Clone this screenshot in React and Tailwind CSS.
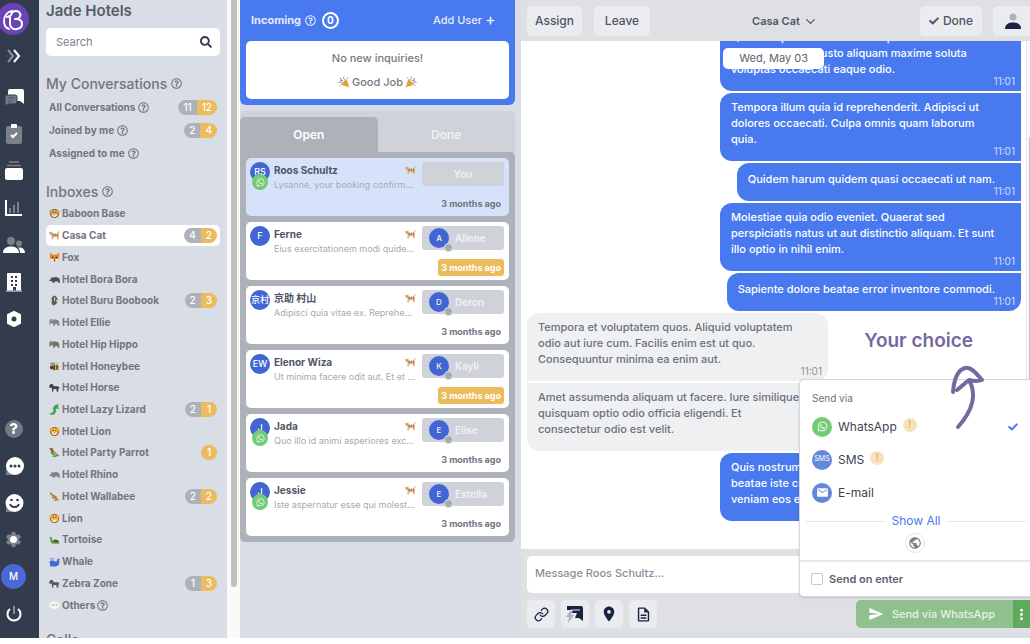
import { useState } from "react";
import {
  FaCheck,
  FaSearch,
  FaRegQuestionCircle,
  FaQuestion,
  FaWhatsapp,
  FaPlus,
} from "react-icons/fa";
import {
  MdEmail,
  MdSend,
  MdLocationOn,
  MdPublic,
  MdMoreVert,
  MdSettings,
  MdOutlineDescription,
} from "react-icons/md";
import { Link, ChevronDown } from "lucide-react";

const myConversations = [
  { name: "All Conversations", open: 11, waiting: 12 },
  { name: "Joined by me", open: 2, waiting: 4 },
  { name: "Assigned to me" },
];

const inboxes = [
  { name: "Baboon Base", icon: "face", color: "#d9a55f", dark: "#8a5a2c" },
  { name: "Casa Cat", icon: "cat", open: 4, waiting: 2, active: true },
  { name: "Fox", icon: "fox", color: "#e0862f" },
  { name: "Hotel Bora Bora", icon: "boar", color: "#4b4e52" },
  { name: "Hotel Buru Boobook", icon: "badger", open: 2, waiting: 3 },
  { name: "Hotel Ellie", icon: "heavy", color: "#7f8489" },
  { name: "Hotel Hip Hippo", icon: "heavy", color: "#74706f" },
  { name: "Hotel Honeybee", icon: "bee" },
  { name: "Hotel Horse", icon: "horse", color: "#3d4043" },
  { name: "Hotel Lazy Lizard", icon: "lizard", open: 2, waiting: 1 },
  { name: "Hotel Lion", icon: "face", color: "#f0b63c", dark: "#a8521d" },
  { name: "Hotel Party Parrot", icon: "parrot", waiting: 1 },
  { name: "Hotel Rhino", icon: "boar", color: "#7c8187" },
  { name: "Hotel Wallabee", icon: "kangaroo", open: 2, waiting: 2 },
  { name: "Lion", icon: "face", color: "#f0b63c", dark: "#a8521d" },
  { name: "Tortoise", icon: "tortoise" },
  { name: "Whale", icon: "whale" },
  { name: "Zebra Zone", icon: "horse", color: "#55585c", open: 1, waiting: 3 },
  { name: "Others", icon: "speech", help: true },
];

const conversations = [
  { name: "Roos Schultz", initials: "RS", text: "Lysanne, your booking confirmation", agent: "You", whatsapp: true, active: true },
  { name: "Ferne", initials: "F", text: "Eius exercitationem modi quidem aut", agent: "Allene", late: true },
  { name: "京助 村山", initials: "京村", text: "Adipisci quia vitae ex. Reprehenderit", agent: "Deron" },
  { name: "Elenor Wiza", initials: "EW", text: "Ut minima facere odit aut. Et et quia", agent: "Kayli", late: true },
  { name: "Jada", initials: "J", text: "Quo illo id animi asperiores excepturi", agent: "Elise", whatsapp: true },
  { name: "Jessie", initials: "J", text: "Iste aspernatur esse qui molestias et", agent: "Estella", whatsapp: true },
];

const messages = [
  { text: "Quasi neque rerum et autem quia. Sit\nullam velit id hic iusto aliquam maxime soluta\nvoluptas occaecati eaque odio." },
  { text: "Tempora illum quia id reprehenderit. Adipisci ut dolores occaecati. Culpa omnis quam laborum quia." },
  { text: "Quidem harum quidem quasi occaecati ut nam.", short: true },
  { text: "Molestiae quia odio eveniet. Quaerat sed perspiciatis natus ut aut distinctio aliquam. Et sunt illo optio in nihil enim." },
  { text: "Sapiente dolore beatae error inventore commodi.", short: true, last: true },
  { text: "Tempora et voluptatem quos. Aliquid voluptatem odio aut iure cum. Facilis enim est ut quo. Consequuntur minima ea enim aut.", received: true },
  { text: "Amet assumenda aliquam ut facere. Iure similique quisquam optio odio officia eligendi. Et consectetur odio est velit.", received: true, last: true },
  { text: "Quis nostrum aut commodi sit. Eos\nbeatae iste consequatur et quia\nveniam eos et.", last: true },
];

function Animal({ icon, color, dark }) {
  return (
    <svg viewBox="0 0 24 24" className="h-[11px] w-[11px] shrink-0" aria-hidden="true">
      {icon === "face" && (
        <>
          <circle cx="12" cy="12" r="10" fill={dark} />
          <circle cx="3.500" cy="8" r="3" fill={color} />
          <circle cx="20.500" cy="8" r="3" fill={color} />
          <ellipse cx="12" cy="12" rx="8" ry="7.500" fill={color} />
          <ellipse cx="12" cy="16" rx="5" ry="4" fill="#f7e3bd" />
          <circle cx="9" cy="10" r="1.500" fill="#3a2a1d" />
          <circle cx="15" cy="10" r="1.500" fill="#3a2a1d" />
          <path d="M10 14h4l-2 2z" fill="#5b3420" />
        </>
      )}
      {icon === "fox" && (
        <>
          <path d="M2 1l6 5h8l6-5v13l-5 8H7l-5-8z" fill={color} />
          <path d="M2 14l7 1 3 4 3-4 7-1-5 8H7z" fill="#f7ead8" />
          <circle cx="8" cy="12" r="1.600" fill="#33251b" />
          <circle cx="16" cy="12" r="1.600" fill="#33251b" />
          <circle cx="12" cy="19" r="1.800" fill="#33251b" />
        </>
      )}
      {icon === "cat" && (
        <>
          <path d="M0 3l3 2 4-2 2 5h9c2-1 0-5 5-6l-2 6v14h-3l-1-7-7 1-2 6H5l1-9-5-3z" fill="#dcb07c" />
          <path d="M8 8h2v5H8zM13 8h2v4h-2zM18 8h2v6h-2z" fill="#8f6236" />
          <path d="M5 20h3v2H5zM18 20h3v2h-3zM1 8h4v2H1z" fill="#fff" />
          <circle cx="4" cy="7" r="1" fill="#33251b" />
        </>
      )}
      {icon === "boar" && (
        <path d="M0 14l5-4 1-4 3 2c5-3 12-1 14 3l1 8h-4l-1-3-7 1v2H8l-1-3-5-1z" fill={color} />
      )}
      {icon === "heavy" && (
        <>
          <path d="M1 8c1-4 6-4 8-2 6-2 12 0 13 4l1 9h-4l-1-4h-5v4H9v-5l-5-1-1 4H1z" fill={color} />
          <circle cx="5" cy="8" r="1" fill="#fff" />
        </>
      )}
      {icon === "badger" && (
        <>
          <path d="M8 3l4-2 4 3 3 5-2 9-6 5-5-3 1-8-2-4z" fill="#565a5c" />
          <path d="M11 4l3 4-3 7zM15 12l3-2-1 6z" fill="#e9e6dc" />
          <path d="M4 12l3 3-1 5z" fill="#b98a4b" />
        </>
      )}
      {icon === "bee" && (
        <>
          <ellipse cx="14" cy="14" rx="9" ry="6" fill="#eeb43a" />
          <path d="M10 8h3v12h-3zM16 8h3v11h-3z" fill="#3b3327" />
          <circle cx="6" cy="14" r="4" fill="#4b3a24" />
          <ellipse cx="8" cy="6" rx="6" ry="3.500" fill="#8d9aa0" />
          <ellipse cx="17" cy="6" rx="4" ry="3" fill="#b6c0c4" />
        </>
      )}
      {icon === "horse" && (
        <path d="M0 9l4-5 4 1 3 4h8c2 0 4 2 4 6l-2-3-1 9h-3l-1-6h-6l-1 6H7l-1-9-4 1z" fill={color} />
      )}
      {icon === "lizard" && (
        <path d="M20 1l-8 3-3 6 2 4-3 5-6 3 8 1 5-6-1-6 3-2 4 1-2-3z" fill="#43a447" stroke="#43a447" strokeWidth="1.500" />
      )}
      {icon === "parrot" && (
        <>
          <path d="M1 3c4-3 8-1 8 3l6 7 8 6-3 1-8-2c-7 0-9-6-8-11z" fill="#4f9347" />
          <path d="M1 3c3-3 7-1 8 3L4 8z" fill="#d34a38" />
          <path d="M8 10l11 8-8-1z" fill="#e6b53b" />
          <path d="M8 19h9v2H8z" fill="#6d4b32" />
        </>
      )}
      {icon === "kangaroo" && (
        <path d="M3 2l3 3 4 3 5 3c3 2 3 5 6 9l2 2-6-2-2 2H9l5-3-4-4-1 3-2-1V11L2 7z" fill="#b9833f" />
      )}
      {icon === "tortoise" && (
        <>
          <path d="M1 7c3-3 6 0 6 4l2 4c4-4 11-3 13 3v3H8l-4-2-1-6z" fill="#63a04a" />
          <path d="M8 17c2-7 12-6 14 1z" fill="#3d5f35" />
        </>
      )}
      {icon === "whale" && (
        <>
          <path d="M1 12c4-4 10-1 13 0 3 0 4-2 4-5l5-2-1 6c2 7-2 12-10 12H3z" fill="#3f6bd8" />
          <path d="M7 10c0-6-5-6-5-3M7 10c0-6 5-6 5-3" stroke="#5d8ce6" strokeWidth="2" fill="none" />
        </>
      )}
      {icon === "speech" && (
        <>
          <path d="M12 3c6 0 11 3 11 8s-5 8-11 8l-6 3 1-4c-4-1-6-4-6-7 0-5 5-8 11-8z" fill="#f6f6f7" />
          <circle cx="7" cy="11" r="1.500" fill="#9a9da2" />
          <circle cx="12" cy="11" r="1.500" fill="#9a9da2" />
          <circle cx="17" cy="11" r="1.500" fill="#9a9da2" />
        </>
      )}
    </svg>
  );
}

function Popper({ flip }) {
  return (
    <svg viewBox="0 0 24 24" className={flip ? "h-3 w-3 -scale-x-100" : "h-3 w-3"} aria-hidden="true">
      <path d="M1 23L7 5l12 12z" fill="#e3ae4b" />
      <path d="M5 15l5 4M7 10l7 7" stroke="#b9782d" strokeWidth="1.500" />
      <path d="M11 7c2-1 2-4 1-6M16 14c2-3 5-2 7-1" stroke="#5b86d8" strokeWidth="2" fill="none" />
      <path d="M14 10l6-6" stroke="#d9654f" strokeWidth="2" />
      <circle cx="18" cy="9" r="1.500" fill="#4c78c4" />
      <circle cx="5" cy="4" r="1.500" fill="#e3ae4b" />
      <circle cx="20" cy="19" r="1.500" fill="#e3ae4b" />
    </svg>
  );
}

function Counts({ open, waiting }) {
  if (!waiting) return null;
  return (
    <span className="ml-auto flex h-[15px] overflow-hidden rounded-full text-[10px] leading-[15px] font-medium text-white">
      {open && <span className="min-w-4 bg-[#adb2ba] px-[5px] text-center">{open}</span>}
      <span className="min-w-4 bg-[#ecbb5d] px-[5px] text-center">{waiting}</span>
    </span>
  );
}

function NavRail() {
  const item = "flex h-[37px] w-[27px] items-center justify-center";
  return (
    <nav className="flex w-[39px] shrink-0 flex-col bg-[#333c4c] pb-1.5 text-white">
      <a href="#home" aria-label="Home" className="flex h-[37px] w-[29px] items-center justify-end">
        <svg viewBox="0 0 32 32" className="h-8 w-8 shrink-0">
          <circle cx="16" cy="16" r="16" fill="#6a43b5" />
          <path
            d="M15 8C10 9 7 13 7 18c0 4 2 7 5 8M10 14l3-1v8c0 4 4 6 7 5 6-1 7-8 1-10h-3c5 0 7-4 4-7-3-2-7-1-8 3"
            fill="none"
            stroke="#fff"
            strokeWidth="2"
            strokeLinecap="round"
            strokeLinejoin="round"
          />
        </svg>
      </a>
      <button aria-label="Expand" className={`${item} mb-1`}>
        <svg viewBox="0 0 16 16" className="h-4 w-4" fill="none" strokeWidth="2">
          <path d="M2 2l5 6-5 6" stroke="#8b919b" />
          <path d="M8 2l5 6-5 6" stroke="#fff" />
        </svg>
      </button>
      <a href="#chats" aria-label="Chats" className={item}>
        <svg viewBox="0 0 20 18" className="h-[18px] w-5">
          <path d="M6 1h12a2 2 0 012 2v13l-4-3H6a2 2 0 01-2-2V3a2 2 0 012-2z" fill="#fff" />
          <path d="M2 7h9a2 2 0 012 2v5a2 2 0 01-2 2H4l-3 2V9a2 2 0 011-2z" fill="#737983" stroke="#333c4c" strokeWidth="1" />
          <path d="M4 10h6M4 13h4" stroke="#4b5361" />
        </svg>
      </a>
      <a href="#tasks" aria-label="Tasks" className={item}>
        <svg viewBox="0 0 16 20" className="h-5 w-4">
          <rect x="0" y="2" width="16" height="18" rx="2" fill="#7b8089" />
          <rect x="5" y="0" width="6" height="4" rx="1" fill="#fff" />
          <path d="M5 11l2 2 4-4" stroke="#fff" strokeWidth="2" fill="none" />
        </svg>
      </a>
      <a href="#archive" aria-label="Archive" className={item}>
        <svg viewBox="0 0 18 20" className="h-5 w-[18px]">
          <rect x="0" y="7" width="18" height="12" rx="2" fill="#fff" />
          <path d="M4 1h10M2 4.500h14" stroke="#7b8089" strokeWidth="1.500" />
        </svg>
      </a>
      <a href="#reports" aria-label="Reports" className={item}>
        <svg viewBox="0 0 18 18" className="h-[18px] w-[18px]">
          <path d="M1 1v15h16" stroke="#fff" strokeWidth="2" fill="none" />
          <path d="M5 14V9M9 14V6M13 14V3" stroke="#7b8089" strokeWidth="2" />
        </svg>
      </a>
      <a href="#contacts" aria-label="Contacts" className={item}>
        <svg viewBox="0 0 22 18" className="h-[18px] w-[22px]">
          <circle cx="8" cy="5" r="4" fill="#7b8089" />
          <circle cx="16" cy="7.500" r="3" fill="#7b8089" />
          <path d="M0 17c0-5 4-6.500 8-6.500s8 1.500 8 6.500zM17 17c0-3-1-4.500-2-5.500 4-.5 7 1.500 7 5.500z" fill="#fff" />
        </svg>
      </a>
      <a href="#hotels" aria-label="Hotels" className={item}>
        <svg viewBox="0 0 16 20" className="h-5 w-4">
          <rect x="1" y="1" width="14" height="18" rx="1" fill="#fff" />
          <path d="M5 4h2v2H5zM9 4h2v2H9zM5 8h2v2H5zM9 8h2v2H9zM5 12h2v2H5zM9 12h2v2H9zM7 15h3v4H7z" fill="#333c4c" />
          <path d="M0 19h16" stroke="#9fb2b7" strokeWidth="1.500" />
        </svg>
      </a>
      <a href="#apps" aria-label="Apps" className={item}>
        <svg viewBox="0 0 16 16" className="h-4 w-4">
          <path d="M8 1l6 3v8l-6 3-6-3V4z" fill="#fff" stroke="#fff" strokeWidth="2" strokeLinejoin="round" />
          <circle cx="8" cy="8" r="2.500" fill="#333c4c" />
        </svg>
      </a>

      <button aria-label="Help" className={`${item} mt-auto`}>
        <span className="flex h-[18px] w-[18px] items-center justify-center rounded-full bg-[#737983]">
          <FaQuestion size={11} />
        </span>
      </button>
      <button aria-label="Feedback" className={item}>
        <svg viewBox="0 0 20 20" className="h-5 w-5">
          <path d="M2 12v7h7z" fill="#7b8089" />
          <circle cx="11" cy="10" r="9" fill="#fff" />
          <circle cx="7" cy="10" r="1.500" fill="#333c4c" />
          <circle cx="11" cy="10" r="1.500" fill="#333c4c" />
          <circle cx="15" cy="10" r="1.500" fill="#333c4c" />
        </svg>
      </button>
      <button aria-label="Mood" className={item}>
        <svg viewBox="0 0 20 20" className="h-5 w-5">
          <path d="M2 12v7h7z" fill="#7b8089" />
          <circle cx="10.500" cy="10" r="9" fill="#fff" />
          <circle cx="7.500" cy="7" r="1.300" fill="#333c4c" />
          <circle cx="13.500" cy="7" r="1.300" fill="#333c4c" />
          <path d="M6 11c1 4 8 4 9 0" stroke="#333c4c" strokeWidth="1.800" fill="none" />
        </svg>
      </button>
      <button aria-label="Settings" className={item}>
        <span className="relative flex items-center justify-center text-[#7b8089]">
          <MdSettings size={19} />
          <span className="absolute h-[7px] w-[7px] rounded-full bg-white" />
        </span>
      </button>
      <button aria-label="Profile" className={item}>
        <span className="flex h-[25px] w-[25px] shrink-0 items-center justify-center rounded-full bg-[#4a68d6] text-[10px] font-medium">
          M
        </span>
      </button>
      <button aria-label="Log out" className={item}>
        <svg viewBox="0 0 16 16" className="h-4 w-4" fill="none" strokeWidth="2">
          <path d="M4 3a6.500 6.500 0 108 0" stroke="#fff" />
          <path d="M8 0v8" stroke="#8b919b" />
        </svg>
      </button>
    </nav>
  );
}

function InboxPanel() {
  return (
    <aside className="flex w-[188px] shrink-0 flex-col overflow-hidden bg-[#d9dde5] px-[7px] text-[#70757f]">
      <h1 className="h-[22px] text-[15px] leading-[22px] font-semibold text-[#545c6c]">Jade Hotels</h1>
      <div className="mt-1.5 flex h-7 shrink-0 items-center rounded-[5px] bg-white pr-2 pl-2.5">
        <input
          type="text"
          aria-label="Search"
          placeholder="Search"
          className="min-w-0 flex-1 text-[11px] outline-none placeholder:text-[#7b808a]"
        />
        <FaSearch size={12} className="text-[#333c4c]" />
      </div>

      <h2 className="mt-3.5 flex h-[26px] shrink-0 items-center gap-1 text-[14px] font-medium">
        My Conversations <FaRegQuestionCircle size={11} />
      </h2>
      <ul className="text-[10px] font-bold">
        {myConversations.map((item) => (
          <li key={item.name} className="flex h-[23px] items-center gap-[3px] px-[3px]">
            {item.name} <FaRegQuestionCircle size={11} />
            <Counts open={item.open} waiting={item.waiting} />
          </li>
        ))}
      </ul>

      <h2 className="mt-3.5 flex h-6 shrink-0 items-center gap-1 text-[14px] font-medium">
        Inboxes <FaRegQuestionCircle size={11} />
      </h2>
      <ul className="flex flex-1 flex-col text-[10px] font-bold">
        {inboxes.map((item) => (
          <li key={item.name} className="flex flex-1">
            <a
              href="#inbox"
              className={`flex flex-1 items-center gap-0.5 rounded-[5px] px-[3px] ${item.active ? "bg-white" : ""}`}
            >
              <Animal icon={item.icon} color={item.color} dark={item.dark} />
              {item.name}
              {item.help && <FaRegQuestionCircle size={11} />}
              <Counts open={item.open} waiting={item.waiting} />
            </a>
          </li>
        ))}
      </ul>
      <h2 className="h-[22px] shrink-0 overflow-hidden pt-3 text-[14px] leading-6 font-medium">Calls</h2>
    </aside>
  );
}

function ConversationCard({ item }) {
  return (
    <li className={`flex h-[58px] gap-1 rounded-[5px] p-1 pr-[5px] ${item.active ? "bg-[#d5e2fa]" : "bg-white"}`}>
      <div className="relative h-5 w-5 shrink-0">
        <span className="flex h-5 w-5 items-center justify-center rounded-full bg-[#4165d3] text-[9px] font-medium text-white">
          {item.initials}
        </span>
        {item.whatsapp && (
          <span className="absolute top-3 left-0.5 flex h-4 w-4 items-center justify-center rounded-full bg-[#73cb73] text-white">
            <FaWhatsapp size={9} />
          </span>
        )}
      </div>
      <div className="min-w-0 flex-1">
        <div className="flex h-4 items-center justify-between">
          <h3 className="text-[10px] font-bold text-[#4d5566]">{item.name}</h3>
          <Animal icon="cat" />
        </div>
        <p className="truncate text-[9px] leading-[14px] text-[#a4abb6]">{item.text}</p>
      </div>
      <div className="flex w-[84px] shrink-0 flex-col items-end justify-between pl-0.5">
        <button className="flex h-6 w-full items-center justify-center rounded-[3px] bg-[#cfd2d8] text-[10px] font-semibold text-[#f1f2f4]">
          {item.agent === "You" ? (
            "You"
          ) : (
            <span className="flex w-full items-center gap-1.5 pl-[7px]">
              <span className="relative flex h-5 w-5 items-center justify-center rounded-full bg-[#4165d3] text-[8px] font-medium">
                {item.agent[0]}
                <span className="absolute -right-1 -bottom-1 h-[9px] w-[9px] rounded-full border border-[#d9dce1] bg-[#a6a9ae]" />
              </span>
              {item.agent}
            </span>
          )}
        </button>
        <time
          className={`rounded-[3px] px-[3px] text-[9px] leading-[17px] font-bold whitespace-nowrap ${
            item.late ? "bg-[#ecbb5d] text-white" : "text-[#70757f]"
          }`}
        >
          3 months ago
        </time>
      </div>
    </li>
  );
}

function ConversationList() {
  const [tab, setTab] = useState("open");

  return (
    <section className="w-[281px] shrink-0 bg-[#d9dde5] pr-1.5">
      <div className="rounded-b-[6px] bg-[#4879ee] px-1.5 pb-1.5">
        <div className="flex h-[41px] items-center gap-1 pr-3.5 pl-[5px] text-[#e4ebfc]">
          <h2 className="text-[11px] font-bold">Incoming</h2>
          <FaRegQuestionCircle size={11} />
          <span className="ml-0.5 flex h-[17px] w-[17px] items-center justify-center rounded-full border-2 border-white text-[10px] font-bold text-white">
            0
          </span>
          <button className="ml-auto flex items-center gap-1 text-[11px] font-medium">
            Add User <FaPlus size={9} />
          </button>
        </div>
        <div className="flex h-[58px] flex-col justify-center rounded-[5px] bg-white text-center text-[11px] leading-6 font-medium text-[#747a84]">
          <p>No new inquiries!</p>
          <p className="flex items-center justify-center gap-0.5">
            <Popper flip /> Good Job <Popper />
          </p>
        </div>
      </div>

      <div className="mt-1.5 rounded-[5px] bg-[#cfd2d8]">
        <div className="flex h-[41px] text-[12px] font-semibold text-white" role="tablist">
          <button
            role="tab"
            aria-selected={tab === "open"}
            onClick={() => setTab("open")}
            className="mt-1.5 flex-1 rounded-t-[5px] bg-[#adb2ba]"
          >
            Open
          </button>
          <button
            role="tab"
            aria-selected={tab === "done"}
            onClick={() => setTab("done")}
            className="mt-1.5 flex-1 text-[#eff0f2]"
          >
            Done
          </button>
        </div>
        <ul className="flex flex-col gap-1.5 rounded-[5px] rounded-tl-none bg-[#adb2ba] p-1.5">
          {conversations.map((item) => (
            <ConversationCard key={item.name} item={item} />
          ))}
        </ul>
      </div>
    </section>
  );
}

function Message({ message }) {
  let shape = message.received
    ? "self-start rounded-r-xl bg-[#eff0f2] text-[#6b717d]"
    : "self-end rounded-l-xl bg-[#4879ee] text-white";
  if (message.received) shape += message.last ? " rounded-bl-xl" : " rounded-tl-xl";
  else if (message.last) shape += " rounded-br-xl";

  return (
    <div className={`shrink-0 pb-1 ${message.short ? "w-fit pt-2" : "w-[301px] pt-1.5"} ${shape}`}>
      <p className="pr-[26px] pl-[11px] text-[11px] leading-4 font-medium whitespace-pre-line">{message.text}</p>
      <time className="-mt-0.5 block pr-1.5 text-right text-[10px] leading-3 opacity-75">11:01</time>
    </div>
  );
}

function Warning() {
  return (
    <span className="mb-1 flex h-3.5 w-3.5 items-center justify-center rounded-full bg-[#f6e3bb] text-[10px] text-[#d9a23c]">
      !
    </span>
  );
}

function SendMenu() {
  const row = "flex h-[33px] w-full items-center gap-1.5 px-3";
  return (
    <div className="absolute right-0 bottom-9 w-[231px] rounded-l-[5px] border border-r-0 border-[#d4d7dc] bg-white text-[12px] text-[#3d4350] shadow-sm">
      <p className="px-3 pt-2.5 text-[10px] leading-4 text-[#6b717d]">Send via</p>
      <button className={`${row} mt-1`}>
        <span className="flex h-5 w-5 items-center justify-center rounded-full bg-[#73cb73] text-white">
          <FaWhatsapp size={11} />
        </span>
        WhatsApp
        <Warning />
        <FaCheck size={10} className="ml-auto text-[#4879ee]" />
      </button>
      <button className={row}>
        <span className="flex h-5 w-5 items-center justify-center rounded-full bg-[#6189d8] text-[7px] text-white">SMS</span>
        SMS
        <Warning />
      </button>
      <button className={row}>
        <span className="flex h-5 w-5 items-center justify-center rounded-full bg-[#6189d8] text-white">
          <MdEmail size={13} />
        </span>
        E-mail
      </button>
      <div className="flex items-center gap-1.5 pr-1 pl-1.5">
        <span className="h-px flex-1 bg-[#e2e4e8]" />
        <button className="leading-6 text-[#4879ee]">Show All</button>
        <span className="h-px flex-1 bg-[#e2e4e8]" />
      </div>
      <button
        aria-label="Webchat"
        className="mx-auto mb-[7px] flex h-5 w-5 items-center justify-center rounded-full border border-[#e2e4e8] text-[#7b808a]"
      >
        <MdPublic size={14} />
      </button>
      <label className="flex h-9 items-center gap-1.5 border-t-2 border-[#e6e8eb] px-[11px] text-[11px] font-semibold text-[#5d6472]">
        <input type="checkbox" className="h-3 w-3 appearance-none rounded-[2px] border border-[#c5c9d0]" />
        Send on enter
      </label>
    </div>
  );
}

function Chat() {
  const button = "flex items-center justify-center rounded-[5px] bg-[#ebecf0]";
  return (
    <section className="flex min-w-0 flex-1 flex-col bg-[#d9dde5] pb-[5px]">
      <header className="flex h-[41px] shrink-0 items-center bg-[#dfe0e4] pl-1.5 text-[12px] font-medium text-[#4d5566]">
        <button className={`${button} h-[30px] w-[55px]`}>Assign</button>
        <button className={`${button} ml-3 h-[30px] w-[56px]`}>Leave</button>
        <div className="relative mx-auto">
          <select
            aria-label="Inbox"
            className="block appearance-none pr-[18px] text-[11px] leading-5 font-semibold field-sizing-content outline-none"
          >
            <option>Casa Cat</option>
          </select>
          <ChevronDown size={15} className="pointer-events-none absolute top-[3px] right-0" />
        </div>
        <button className={`${button} mr-[11px] h-[30px] w-[62px] gap-1`}>
          <FaCheck size={10} /> Done
        </button>
        <button aria-label="Contact" className={`${button} h-[30px] w-[37px] rounded-r-none pl-1`}>
          <svg viewBox="0 0 16 16" className="h-4 w-4">
            <circle cx="8" cy="4" r="3.500" fill="#adb2ba" />
            <path d="M0 16c0-5 4-6.500 8-6.500s8 1.500 8 6.500z" fill="#17233f" />
          </svg>
        </button>
      </header>

      <div className="relative flex min-h-0 flex-1 bg-white">
        <div className="flex flex-1 flex-col justify-end gap-0.5 overflow-hidden pr-[5px] pb-7 pl-1.5">
          {messages.map((message) => (
            <Message key={message.text} message={message} />
          ))}
        </div>
        <div className="flex w-1 flex-col border-l border-[#e8e8ea] bg-[#fafafa] pl-0.5">
          <span className="mt-24 flex-1 bg-[#c1c1c1]" />
        </div>
        <span className="absolute top-[7px] right-[206px] rounded-[5px] bg-white px-4 text-[11px] leading-[21px] text-[#5d6472]">
          Wed, May 03
        </span>
        <p className="absolute right-[57px] bottom-[194px] text-[19px] leading-7 font-semibold text-[#75699f]">
          Your choice
        </p>
      </div>

      <footer className="relative shrink-0 bg-[#dfe0e4] pt-[7px] pb-[5px] pl-1.5">
        <textarea
          aria-label="Message"
          placeholder="Message Roos Schultz..."
          className="block h-[37px] w-full resize-none rounded-l-[5px] bg-white px-2 py-[9px] text-[11px] leading-4 font-medium outline-none placeholder:text-[#8a8f98]"
        />
        <div className="mt-[7px] flex items-center gap-1.5 text-[#17233f]">
          <button aria-label="Attach file" className={`${button} h-7 w-7`}>
            <Link size={15} />
          </button>
          <button aria-label="Quick replies" className={`${button} h-7 w-7`}>
            <svg viewBox="0 0 18 18" className="h-[18px] w-[18px]">
              <path d="M1 1h14a2 2 0 012 2v13l-4-3H9l2-5H6V5H1z" fill="#17233f" />
              <path d="M5 5h9" stroke="#ebecf0" />
              <path d="M4 6L0 12h3l-1 6 6-8H5l2-4z" fill="#adb2ba" />
            </svg>
          </button>
          <button aria-label="Share location" className={`${button} h-7 w-7`}>
            <MdLocationOn size={18} />
          </button>
          <button aria-label="Templates" className={`${button} h-7 w-7`}>
            <MdOutlineDescription size={17} />
          </button>
          <div className="ml-auto flex h-7 text-[11px] font-medium text-[#e6f2e5]">
            <button className="flex items-center gap-2 rounded-l-[5px] bg-[#91c08f] pr-[18px] pl-3">
              <MdSend size={16} className="text-white" /> Send via WhatsApp
            </button>
            <button aria-label="Send options" className="w-[17px] bg-[#5faa5d] text-white">
              <MdMoreVert size={17} />
            </button>
          </div>
        </div>
        <SendMenu />
        <svg viewBox="0 0 40 70" className="pointer-events-none absolute right-[43px] bottom-[201px] h-[70px] w-10" fill="none">
          <path
            d="M6 30C7 18 11 8 18 6c6-2 12 6 17 12-5 2-9 1-13 0-4 3-8 7-12 10M22 18c8 14 4 30-11 47"
            stroke="#75699f"
            strokeWidth="4"
            strokeLinecap="round"
            strokeLinejoin="round"
          />
        </svg>
      </footer>
    </section>
  );
}

export default function App() {
  return (
    <div className="h-screen bg-white pb-1.5 font-['Inter','Noto_Sans_CJK_JP',sans-serif]">
      <main className="flex h-full overflow-hidden">
        <NavRail />
        <InboxPanel />
        <div className="w-[13px] shrink-0 bg-[#fafafa] pr-[3px] pl-1">
          <div className="h-[92%] rounded-b-full bg-[#c1c1c1]" />
        </div>
        <ConversationList />
        <Chat />
      </main>
    </div>
  );
}
